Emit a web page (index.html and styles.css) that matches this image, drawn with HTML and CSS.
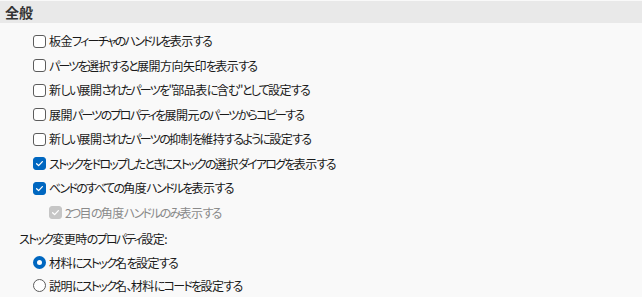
FILE: index.html
```html
<!DOCTYPE html>
<html lang="ja">
<head>
<meta charset="utf-8">
<link rel="stylesheet" href="styles.css">
</head>
<body>
<div class="panel">
  <div class="header">全般</div>
  <div class="options">
    <div class="row"><span class="cb"></span><span class="lbl"><span class="k">板金</span>フィーチャのハンドルを<span class="k">表示</span>する</span></div>
    <div class="row"><span class="cb"></span><span class="lbl">パーツを<span class="k">選択</span>すると<span class="k">展開方向矢印</span>を<span class="k">表示</span>する</span></div>
    <div class="row"><span class="cb"></span><span class="lbl"><span class="k">新</span>しい<span class="k">展開</span>されたパーツを"<span class="k">部品表</span>に<span class="k">含</span>む"として<span class="k">設定</span>する</span></div>
    <div class="row"><span class="cb"></span><span class="lbl"><span class="k">展開</span>パーツのプロパティを<span class="k">展開元</span>のパーツからコピーする</span></div>
    <div class="row"><span class="cb"></span><span class="lbl"><span class="k">新</span>しい<span class="k">展開</span>されたパーツの<span class="k">抑制</span>を<span class="k">維持</span>するように<span class="k">設定</span>する</span></div>
    <div class="row"><span class="cb checked"><svg viewBox="0 0 13 13"><path d="M3.6 6.7 L5.6 8.6 L9.4 4.6" fill="none" stroke="#fff" stroke-width="1.3" stroke-linecap="round" stroke-linejoin="round"/></svg></span><span class="lbl">ストックをドロップしたときにストックの<span class="k">選択</span>ダイアログを<span class="k">表示</span>する</span></div>
    <div class="row"><span class="cb checked"><svg viewBox="0 0 13 13"><path d="M3.6 6.7 L5.6 8.6 L9.4 4.6" fill="none" stroke="#fff" stroke-width="1.3" stroke-linecap="round" stroke-linejoin="round"/></svg></span><span class="lbl">ベンドのすべての<span class="k">角度</span>ハンドルを<span class="k">表示</span>する</span></div>
    <div class="row sub"><span class="cb disabled"><svg viewBox="0 0 13 13"><path d="M3.6 6.7 L5.6 8.6 L9.4 4.6" fill="none" stroke="#fff" stroke-width="1.3" stroke-linecap="round" stroke-linejoin="round"/></svg></span><span class="lbl dim">2つ<span class="k">目</span>の<span class="k">角度</span>ハンドルのみ<span class="k">表示</span>する</span></div>
    <div class="group-label">ストック<span class="k">変更時</span>のプロパティ<span class="k">設定</span>:</div>
    <div class="row radio-row"><span class="rb on"></span><span class="lbl"><span class="k">材料</span>にストック<span class="k">名</span>を<span class="k">設定</span>する</span></div>
    <div class="row radio-row"><span class="rb"></span><span class="lbl"><span class="k">説明</span>にストック<span class="k">名</span>、<span class="k">材料</span>にコードを<span class="k">設定</span>する</span></div>
  </div>
</div>
</body>
</html>
```
FILE: styles.css
```css
html, body {
  margin: 0;
  padding: 0;
  background: #f9f9f9;
}
body {
  font-family: "Noto Sans CJK JP", "Noto Sans", sans-serif;
  font-size: 12px;
  letter-spacing: -1.75px;
  color: #1a1a1a;
  font-feature-settings: "palt";
}
.k {
  letter-spacing: -0.5px;
}
.panel {
  width: 642px;
  height: 297px;
  padding-top: 1px;
  box-sizing: border-box;
}
.header {
  height: 22px;
  background: #e9e9e9;
  font-size: 14px;
  letter-spacing: 0;
  font-weight: bold;
  color: #333;
  display: flex;
  align-items: center;
  padding-left: 5px;
}
.options {
  padding-top: 6px;
  padding-left: 33px;
}
.row {
  height: 24.5px;
  display: flex;
  align-items: center;
  gap: 3px;
}
.row.sub {
  padding-left: 16px;
}
.cb {
  width: 13px;
  height: 13px;
  box-sizing: border-box;
  border: 1px solid #5c5c5c;
  border-radius: 3px;
  background: #fff;
  flex: none;
  display: flex;
}
.cb svg {
  width: 13px;
  height: 13px;
  margin: -1px;
}
.cb.checked {
  background: #0067c0;
  border-color: #0067c0;
}
.cb.disabled {
  background: #c6c6c6;
  border-color: #c6c6c6;
}
.lbl {
  white-space: nowrap;
  line-height: 1;
}
.lbl.dim {
  color: #8a8a8a;
}
.group-label {
  margin-left: -14px;
  height: 25px;
  display: flex;
  align-items: center;
  padding-top: 1px;
  white-space: nowrap;
}
.radio-row {
  height: 23px;
}
.rb {
  width: 13px;
  height: 13px;
  box-sizing: border-box;
  border: 1px solid #5c5c5c;
  border-radius: 50%;
  background: #fff;
  flex: none;
}
.rb.on {
  border: 4px solid #0067c0;
  background: #fff;
}
```
